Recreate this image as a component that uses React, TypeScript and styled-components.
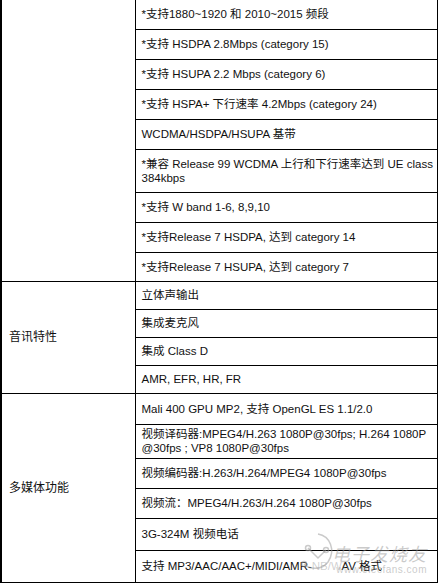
import React from "react";
import styled, { createGlobalStyle } from "styled-components";

const Global = createGlobalStyle`
  html, body { margin: 0; padding: 0; background: #fff; }
  body { font-family: "Liberation Sans", "Noto Sans CJK SC", sans-serif; color: #111; }
`;

const Page = styled.div`
  position: relative;
  width: 445px;
  height: 584px;
  overflow: hidden;
  background: #fff;
`;

const Table = styled.table`
  border-collapse: collapse;
  width: 438px;
  table-layout: fixed;
  font-size: 11.5px;
  line-height: 14px;
`;

const Row = styled.tr<{ $h: number }>`
  height: ${(p) => p.$h}px;
`;

const LabelCell = styled.td<{ $first?: boolean }>`
  width: 126px;
  border: 1px solid #000;
  border-left: 2px solid #000;
  border-top: ${(p) => (p.$first ? "none" : "1px solid #000")};
  padding: 0 0 0 7px;
  vertical-align: middle;
  font-size: 12px;
`;

const ItemCell = styled.td<{ $first?: boolean }>`
  border: 1px solid #000;
  border-top: ${(p) => (p.$first ? "none" : "1px solid #000")};
  padding: 0 2px 0 6px;
  vertical-align: middle;
`;

const Line = styled.div`
  white-space: nowrap;
`;

const Faint = styled.span`
  color: rgba(120, 120, 120, 0.35);
`;

const Watermark = styled.div`
  position: absolute;
  left: 296px;
  top: 530px;
  display: flex;
  align-items: flex-start;
  pointer-events: none;
`;

const WmText = styled.div`
  display: flex;
  flex-direction: column;
  align-items: flex-end;
  padding-top: 12px;
  margin-left: -8px;
`;

const WmTitle = styled.div`
  font-family: "Noto Sans CJK SC", sans-serif;
  font-size: 18px;
  line-height: 22px;
  font-style: italic;
  color: rgba(150, 150, 150, 0.5);
  letter-spacing: 1px;
`;

const WmUrl = styled.div`
  font-family: "Liberation Sans", sans-serif;
  font-size: 10px;
  line-height: 12px;
  color: rgba(150, 150, 150, 0.5);
  letter-spacing: 0.5px;
`;

type Item = { lines: React.ReactNode[]; h: number };
type Sec = { label: string; rows: Item[] };

const sections: Sec[] = [
  {
    label: "",
    rows: [
      { lines: ["*支持1880~1920 和 2010~2015 频段"], h: 29 },
      { lines: ["*支持 HSDPA 2.8Mbps (category 15)"], h: 30 },
      { lines: ["*支持 HSUPA 2.2 Mbps (category 6)"], h: 30 },
      { lines: ["*支持 HSPA+ 下行速率 4.2Mbps (category 24)"], h: 30 },
      { lines: ["WCDMA/HSDPA/HSUPA 基带"], h: 30 },
      { lines: ["*兼容 Release 99 WCDMA 上行和下行速率达到 UE class", "384kbps"], h: 43 },
      { lines: ["*支持 W band 1-6, 8,9,10"], h: 30 },
      { lines: ["*支持Release 7 HSDPA, 达到 category 14"], h: 30 },
      { lines: ["*支持Release 7 HSUPA, 达到 category 7"], h: 29 },
    ],
  },
  {
    label: "音讯特性",
    rows: [
      { lines: ["立体声输出"], h: 28 },
      { lines: ["集成麦克风"], h: 28 },
      { lines: ["集成 Class D"], h: 28 },
      { lines: ["AMR, EFR, HR, FR"], h: 28 },
    ],
  },
  {
    label: "多媒体功能",
    rows: [
      { lines: ["Mali 400 GPU MP2, 支持 OpenGL ES 1.1/2.0"], h: 31 },
      { lines: ["视频译码器:MPEG4/H.263 1080P@30fps; H.264 1080P", "@30fps ; VP8 1080P@30fps"], h: 34 },
      { lines: ["视频编码器:H.263/H.264/MPEG4 1080P@30fps"], h: 30 },
      { lines: ["视频流：MPEG4/H.263/H.264 1080P@30fps"], h: 30 },
      { lines: ["3G-324M 视频电话"], h: 32 },
      {
        lines: [
          <>
            支持 MP3/AAC/AAC+/MIDI/AMR-<Faint>NB/W</Faint>AV 格式
          </>,
        ],
        h: 32,
      },
    ],
  },
];

export default function App() {
  return (
    <Page>
      <Global />
      <Table>
        <colgroup>
          <col style={{ width: 134 }} />
          <col />
        </colgroup>
        <tbody>
          {sections.map((s, si) =>
            s.rows.map((r, ri) => (
              <Row key={`${si}-${ri}`} $h={r.h}>
                {ri === 0 && (
                  <LabelCell rowSpan={s.rows.length} $first={si === 0}>
                    {s.label}
                  </LabelCell>
                )}
                <ItemCell $first={si === 0 && ri === 0}>
                  {r.lines.map((l, li) => (
                    <Line key={li}>{l}</Line>
                  ))}
                </ItemCell>
              </Row>
            ))
          )}
        </tbody>
      </Table>
      <Watermark>
        <svg width="44" height="50" viewBox="0 0 44 50">
          <g fill="none" stroke="rgba(150,150,150,0.5)" strokeWidth="1.5">
            <path d="M22 4 C 34 6, 40 20, 32 32 C 26 40, 14 40, 8 34" />
            <path d="M12 18 L 22 28 L 30 20" />
            <circle cx="12" cy="18" r="2.5" />
            <circle cx="30" cy="20" r="2.5" />
            <circle cx="8" cy="34" r="2.5" />
          </g>
        </svg>
        <WmText>
          <WmTitle>电子发烧友</WmTitle>
          <WmUrl>www.elecfans.com</WmUrl>
        </WmText>
      </Watermark>
    </Page>
  );
}
